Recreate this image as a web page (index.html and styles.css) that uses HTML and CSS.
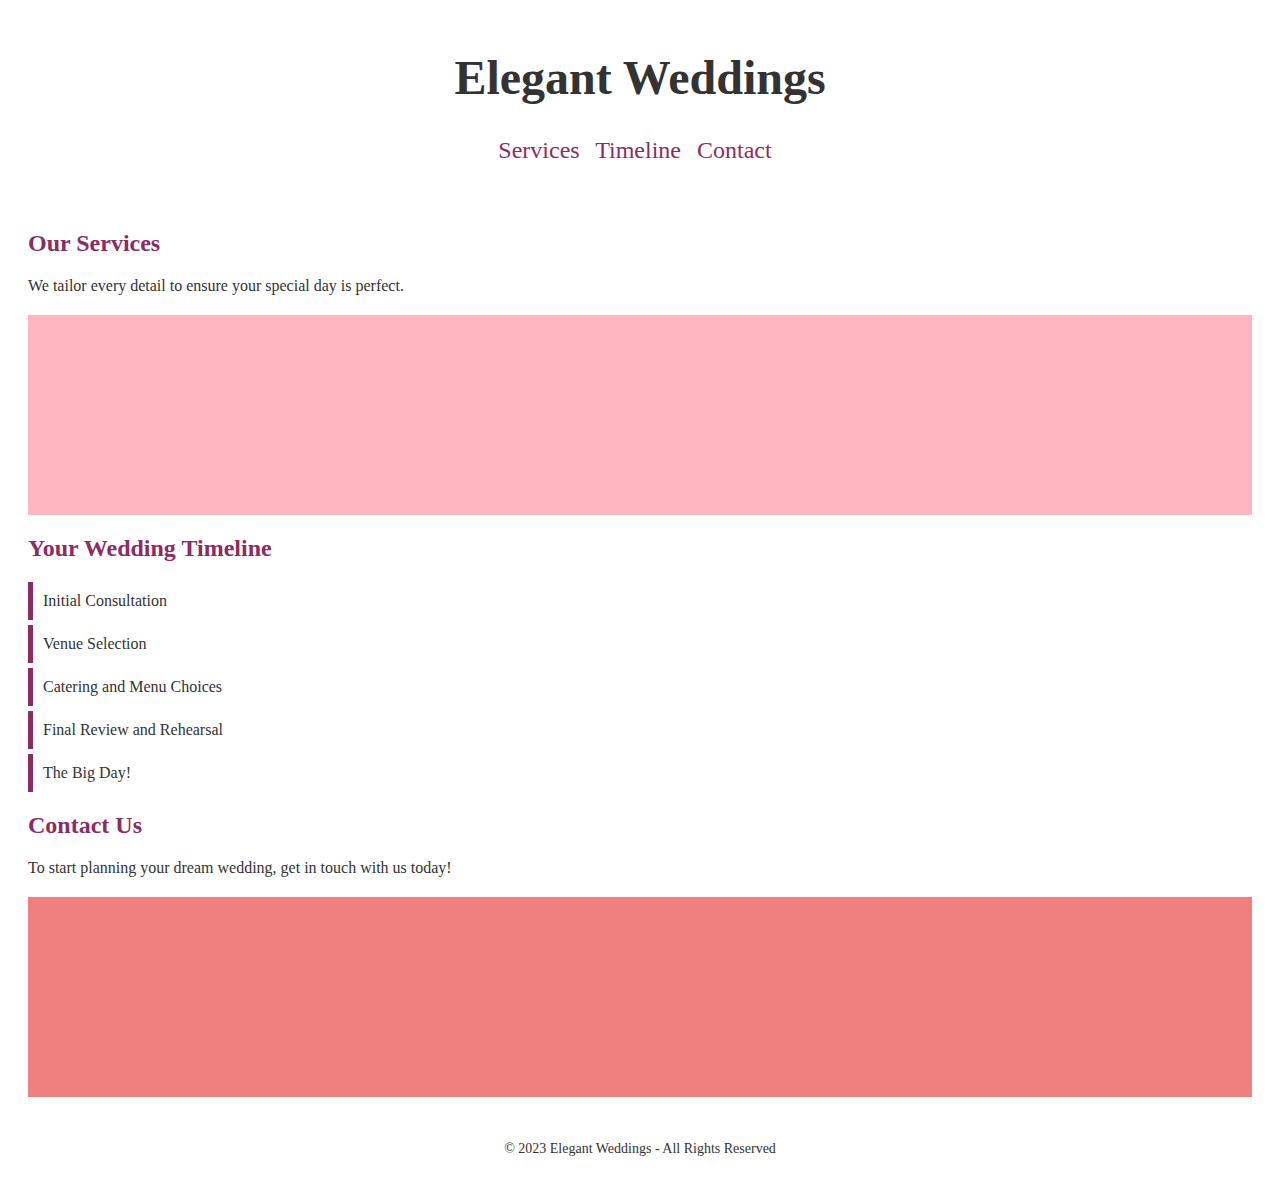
FILE: index.html
```html
<!DOCTYPE html>
<html lang="en">
<head>
<meta charset="utf-8">
<title>Elegant Weddings</title>
<link rel="stylesheet" href="styles.css">
</head>
<body>
<header class="site-header">
  <h1 class="site-title">Elegant Weddings</h1>
  <nav class="site-nav">
    <a href="#services">Services</a>
    <a href="#timeline">Timeline</a>
    <a href="#contact">Contact</a>
  </nav>
</header>
<main class="content">
  <section id="services" class="section">
    <h2 class="section-title">Our Services</h2>
    <p class="section-text">We tailor every detail to ensure your special day is perfect.</p>
    <div class="feature-box feature-pink"></div>
  </section>
  <section id="timeline" class="section">
    <h2 class="section-title">Your Wedding Timeline</h2>
    <ul class="timeline">
      <li class="timeline-item">Initial Consultation</li>
      <li class="timeline-item">Venue Selection</li>
      <li class="timeline-item">Catering and Menu Choices</li>
      <li class="timeline-item">Final Review and Rehearsal</li>
      <li class="timeline-item">The Big Day!</li>
    </ul>
  </section>
  <section id="contact" class="section">
    <h2 class="section-title">Contact Us</h2>
    <p class="section-text">To start planning your dream wedding, get in touch with us today!</p>
    <div class="feature-box feature-coral"></div>
  </section>
</main>
<footer class="site-footer">
  <p class="footer-text">&copy; 2023 Elegant Weddings - All Rights Reserved</p>
</footer>
</body>
</html>
```

FILE: styles.css
```css
html, body {
  margin: 0;
  padding: 0;
  background: #ffffff;
}

body {
  font-family: "Liberation Serif", "Times New Roman", serif;
  color: #333333;
  font-size: 16px;
}

.site-header {
  text-align: center;
  padding: 18px 0 46px;
}

.site-title {
  font-size: 48px;
  font-weight: bold;
  color: #333333;
  margin: 32px 0;
}

.site-nav {
  text-align: center;
  font-size: 24px;
}

.site-nav a {
  color: #8b2d62;
  text-decoration: none;
  margin-right: 10px;
}

.content {
  padding: 0 28px;
}

.section-title {
  font-size: 24px;
  font-weight: bold;
  color: #8b2d62;
  margin: 20px 0;
}

.section-text {
  margin: 20px 0;
}

.feature-box {
  height: 200px;
  margin: 20px 0;
}

.feature-pink {
  background: #ffb6c1;
}

.feature-coral {
  background: #f08080;
}

.timeline {
  list-style: none;
  margin: 0;
  padding: 0;
}

.timeline-item {
  border-left: 5px solid #8b2d62;
  padding: 10px 10px;
  margin-bottom: 5px;
}

.site-footer {
  text-align: center;
  padding: 24px 0 32px;
}

.footer-text {
  margin: 0;
  font-size: 14px;
}
```
